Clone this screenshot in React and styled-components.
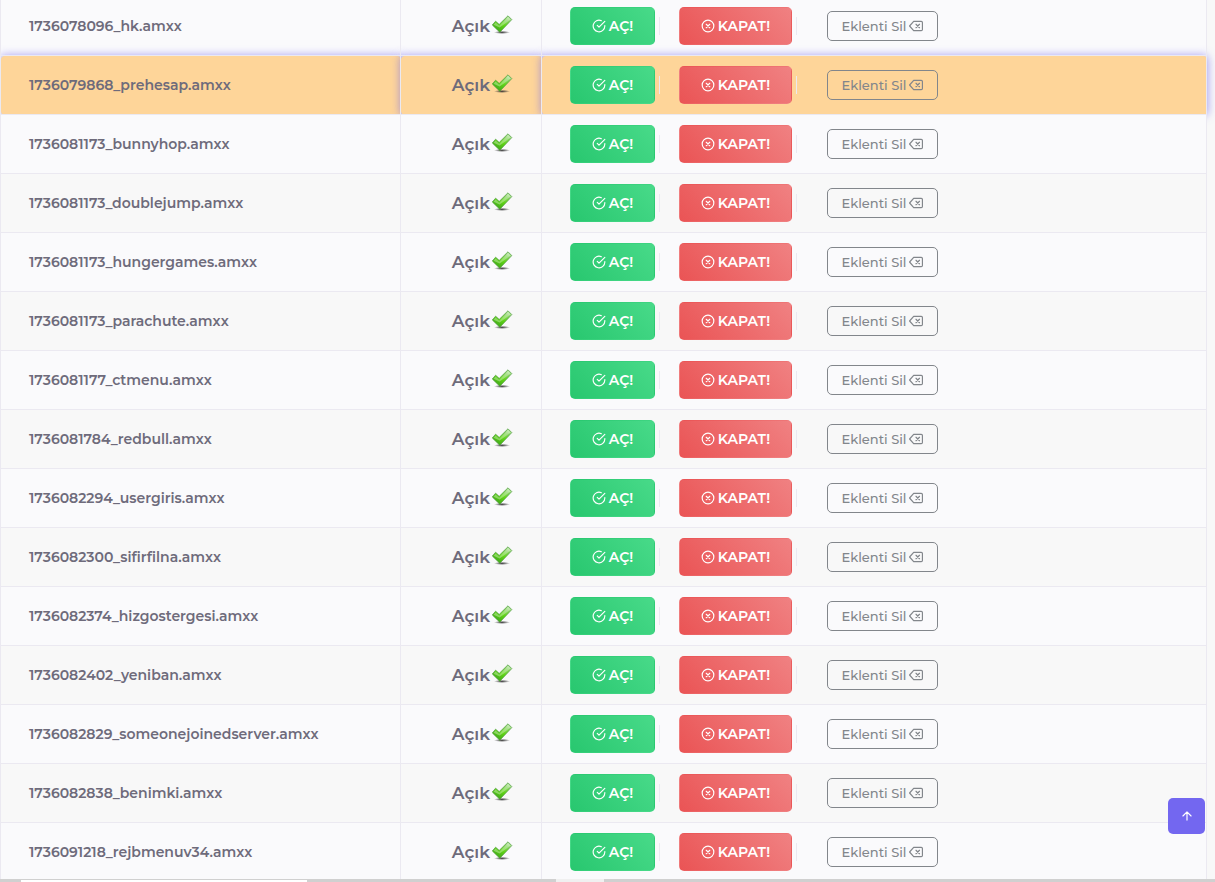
import React, { useState } from 'react';
import styled, { createGlobalStyle, css } from 'styled-components';

const GlobalStyle = createGlobalStyle`
    * {
        box-sizing: border-box;
    }

    body {
        margin: 0;
        background: #f8f8f8;
        color: #6e6b7b;
        font-family: Montserrat, Inter, "Open Sans", sans-serif;
        font-size: 14px;
    }
`;

const Page = styled.main`
    height: 100vh;
    overflow: hidden;
    padding-right: 8px;
`;

const PluginTable = styled.table`
    width: 100%;
    margin-top: -4px;
    border-collapse: collapse;
    table-layout: fixed;
`;

const Column = styled.col`
    width: ${({ $width }) => $width || 'auto'};
`;

const Cell = styled.td`
    height: 59px;
    padding: 0 28px;
    border: 1px solid #ebe9f1;
    vertical-align: middle;
    text-align: ${({ $align }) => $align || 'left'};
    white-space: nowrap;
`;

const Row = styled.tr`
    & > td {
        background: #fafafc;
    }

    &:nth-child(even) > td {
        background: #f8f8f8;
    }

    ${({ $active }) => $active && css`
        &&& > td {
            background: #fed599;
            border-radius: 4px;
            box-shadow: 0 0 8px 1px rgba(115, 103, 240, 0.6);
        }
    `}
`;

const FileName = styled.span`
    font-size: 14px;
    font-weight: 600;
`;

const Status = styled.span`
    display: inline-flex;
    align-items: center;
    gap: 2px;
    font-size: 17px;
    font-weight: 600;
    vertical-align: middle;

    svg {
        flex: none;
        margin-bottom: 3px;
    }
`;

const Actions = styled.div`
    display: flex;
    align-items: center;
`;

const Divider = styled.span`
    width: 1px;
    height: 18px;
    margin-left: 4px;
    margin-right: ${({ $gap }) => $gap};
    background: #ebe9f1;
`;

const buttonBase = css`
    display: inline-flex;
    align-items: center;
    justify-content: center;
    gap: 3px;
    padding: 0;
    border-radius: 5px;
    font-family: inherit;
    cursor: pointer;
`;

const GradientButton = styled.button`
    ${buttonBase}
    width: ${({ $width }) => $width};
    height: 38px;
    border: 1px solid transparent;
    color: #fff;
    font-size: 14px;
    font-weight: 600;
    background: linear-gradient(47deg, ${({ $from, $to }) => `${$from}, ${$to}`});
`;

const DeleteButton = styled.button`
    ${buttonBase}
    width: 111px;
    height: 30px;
    border: 1px solid #82868b;
    background: transparent;
    color: #82868b;
    font-size: 13px;
    font-weight: 500;
`;

const ScrollTop = styled.button`
    ${buttonBase}
    position: fixed;
    right: 10px;
    bottom: 48px;
    width: 37px;
    height: 36px;
    border: 0;
    background: #7367f0;
    color: #fff;
`;

const BottomBar = styled.div`
    position: fixed;
    left: 0;
    right: 0;
    bottom: 0;
    display: flex;
    height: 3px;
    padding-left: 21px;
    gap: 249px;
    background: #d0d0d0;
`;

const BarTab = styled.span`
    width: ${({ $width }) => $width};
    margin-top: ${({ $top }) => $top || '0'};
    background: ${({ $color }) => $color};
`;

const HiddenSvg = styled.svg`
    position: absolute;
`;

function Icon({ size = 14, children }) {
    return (
        <svg width={size} height={size} viewBox="0 0 24 24" fill="none" stroke="currentColor"
             strokeWidth="2" strokeLinecap="round" strokeLinejoin="round" aria-hidden="true">
            {children}
        </svg>
    );
}

const CheckCircle = () => (
    <Icon>
        <path d="M22 11.08V12a10 10 0 1 1-5.93-9.14" />
        <polyline points="22 4 12 14.01 9 11.01" />
    </Icon>
);

const XCircle = () => (
    <Icon>
        <circle cx="12" cy="12" r="10" />
        <path d="M15 9l-6 6M9 9l6 6" />
    </Icon>
);

const Backspace = () => (
    <Icon>
        <path d="M21 4H8l-7 8 7 8h13a2 2 0 0 0 2-2V6a2 2 0 0 0-2-2z" />
        <path d="M18 9l-6 6M12 9l6 6" />
    </Icon>
);

const ArrowUp = () => (
    <Icon>
        <path d="M12 19V5M5 12l7-7 7 7" />
    </Icon>
);

const Tick = () => (
    <svg width="21" height="20" viewBox="1 0 21 20" aria-hidden="true">
        <ellipse cx="11" cy="17.4" rx="8" ry="1.6" fill="url(#tickShadow)" />
        <path d="M1.3 10 4.6 6.2 8.2 9.4 17 0.8 20.8 4.6 8.8 17.2z" fill="url(#tickFill)"
              stroke="#4a9a38" strokeWidth="0.7" strokeLinejoin="round" />
        <path d="M2.5 9.8 4.6 7.4 8.2 10.7 17 2 19.4 4.5 14.6 8.2 8.6 12.4z" fill="#fff" opacity="0.32" />
    </svg>
);

const TickDefs = () => (
    <HiddenSvg width="0" height="0" aria-hidden="true">
        <defs>
            <linearGradient id="tickFill" x1="1" y1="0" x2="0.3" y2="1">
                <stop offset="0" stopColor="#d4f0cc" />
                <stop offset="0.3" stopColor="#86d35e" />
                <stop offset="0.6" stopColor="#5fd414" />
                <stop offset="1" stopColor="#3fa51c" />
            </linearGradient>
            <radialGradient id="tickShadow">
                <stop offset="0" stopColor="#222" stopOpacity="0.85" />
                <stop offset="0.5" stopColor="#333" stopOpacity="0.5" />
                <stop offset="1" stopColor="#333" stopOpacity="0" />
            </radialGradient>
        </defs>
    </HiddenSvg>
);

const initialPlugins = [
    '1736078096_hk.amxx',
    '1736079868_prehesap.amxx',
    '1736081173_bunnyhop.amxx',
    '1736081173_doublejump.amxx',
    '1736081173_hungergames.amxx',
    '1736081173_parachute.amxx',
    '1736081177_ctmenu.amxx',
    '1736081784_redbull.amxx',
    '1736082294_usergiris.amxx',
    '1736082300_sifirfilna.amxx',
    '1736082374_hizgostergesi.amxx',
    '1736082402_yeniban.amxx',
    '1736082829_someonejoinedserver.amxx',
    '1736082838_benimki.amxx',
    '1736091218_rejbmenuv34.amxx',
];

function PluginRow({ name, active, onSelect }) {
    return (
        <Row $active={active} onClick={onSelect}>
            <Cell><FileName>{name}</FileName></Cell>
            <Cell $align="right"><Status>Açık<Tick /></Status></Cell>
            <Cell>
                <Actions>
                    <GradientButton type="button" $width="85px" $from="#28c76f" $to="#48da89">
                        <CheckCircle />AÇ!
                    </GradientButton>
                    <Divider $gap="19px" />
                    <GradientButton type="button" $width="113px" $from="#ea5455" $to="#f08182">
                        <XCircle />KAPAT!
                    </GradientButton>
                    <Divider $gap="30px" />
                    <DeleteButton type="button">Eklenti Sil<Backspace /></DeleteButton>
                </Actions>
            </Cell>
        </Row>
    );
}

function App() {
    const [selected, setSelected] = useState('1736079868_prehesap.amxx');

    return (
        <>
            <GlobalStyle />
            <TickDefs />
            <Page>
                <PluginTable>
                    <colgroup>
                        <Column $width="400px" />
                        <Column $width="141px" />
                        <Column />
                    </colgroup>
                    <tbody>
                        {initialPlugins.map(name => (
                            <PluginRow key={name} name={name} active={selected === name}
                                       onSelect={() => setSelected(name)} />
                        ))}
                    </tbody>
                </PluginTable>
            </Page>
            <ScrollTop type="button" aria-label="Yukarı çık" onClick={() => window.scrollTo(0, 0)}>
                <ArrowUp />
            </ScrollTop>
            <BottomBar>
                <BarTab $width="286px" $top="1px" $color="#fff" />
                <BarTab $width="48px" $color="#f0f0f0" />
            </BottomBar>
        </>
    );
}

export default App;
